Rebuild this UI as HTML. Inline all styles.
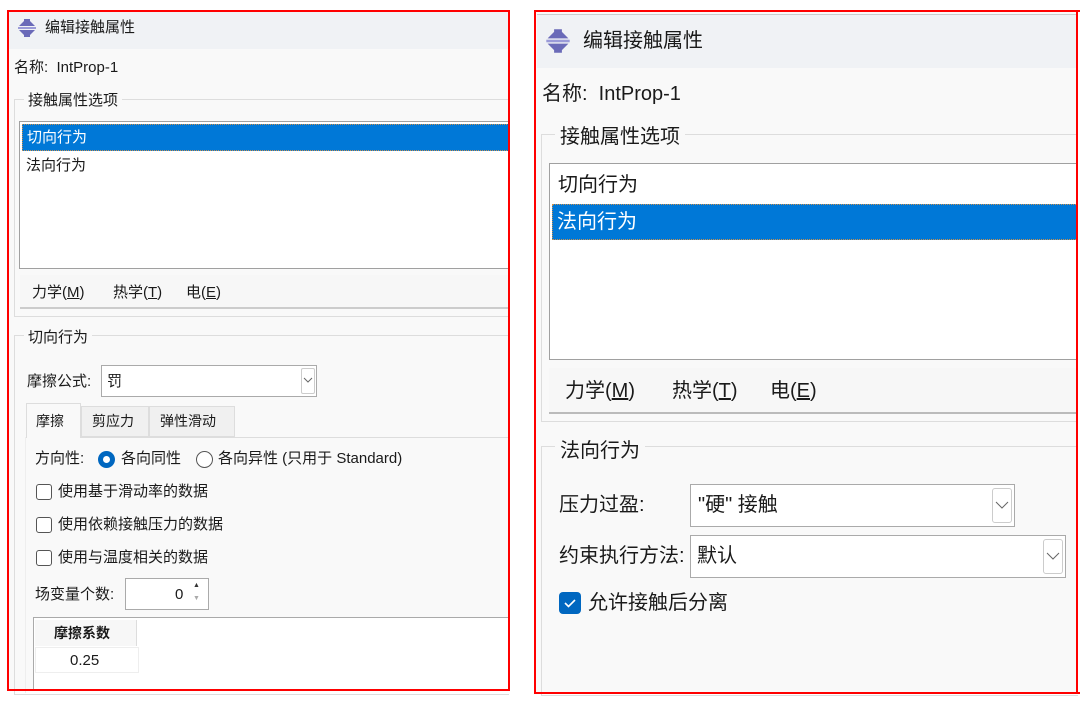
<!DOCTYPE html>
<html><head><meta charset="utf-8"><style>
*{margin:0;padding:0;box-sizing:border-box}
body{width:1080px;height:703px;background:#fff;position:relative;overflow:hidden;font-family:"Liberation Sans","Noto Sans CJK SC",sans-serif;color:#1a1a1a}
.a{position:absolute;white-space:nowrap}
.box{position:absolute}
.t{line-height:1}
</style></head><body>

<!-- LEFT PANEL -->
<div class="box" style="left:8px;top:11px;width:501px;height:679px;background:#f9f9f9"></div>
<div class="box" style="left:8px;top:11px;width:501px;height:38px;background:#f0f2f5"></div>
<svg class="a" style="left:17px;top:18px" width="20" height="20" viewBox="0 0 20 20"><path d="M7 1h6v2l5 5H2l5-5z M2 12h16l-5 5v2H7v-2z" fill="#6a6ab8"/><rect x="1" y="9" width="18" height="2" fill="#9a9ad8"/></svg>
<div class="a t" style="left:45px;top:20px;font-size:15px">编辑接触属性</div>
<div class="a t" style="left:14px;top:60px;font-size:15px">名称:&nbsp; IntProp-1</div>
<div class="box" style="left:14px;top:99px;width:495px;height:218px;border:1px solid #ddd;border-right:none"></div>
<div class="a t" style="left:24px;top:93px;font-size:15px;background:#f9f9f9;padding:0 4px">接触属性选项</div>
<div class="box" style="left:19px;top:121px;width:490px;height:148px;background:#fff;border:1px solid #a0a0a0;border-right:none"></div>
<div class="box" style="left:22px;top:124px;width:487px;height:27px;background:#0078d7;border:1px dotted #c89050"></div>
<div class="a t" style="left:27px;top:130px;font-size:15px;color:#fff">切向行为</div>
<div class="a t" style="left:26px;top:158px;font-size:15px">法向行为</div>
<div class="box" style="left:20px;top:275px;width:489px;height:34px;background:#f7f7f7;border-bottom:2px solid #ccc"></div>
<div class="a t" style="left:32px;top:285px;font-size:15px">力学(<u>M</u>)</div>
<div class="a t" style="left:113px;top:285px;font-size:15px">热学(<u>T</u>)</div>
<div class="a t" style="left:186px;top:285px;font-size:15px">电(<u>E</u>)</div>
<div class="box" style="left:14px;top:335px;width:495px;height:360px;border:1px solid #ddd;border-right:none"></div>
<div class="a t" style="left:24px;top:330px;font-size:15px;background:#f9f9f9;padding:0 4px">切向行为</div>
<div class="a t" style="left:27px;top:374px;font-size:15px">摩擦公式:</div>
<div class="box" style="left:101px;top:365px;width:216px;height:32px;background:#fff;border:1px solid #aaa"></div>
<div class="a t" style="left:107px;top:374px;font-size:15px">罚</div>
<div class="box" style="left:301px;top:368px;width:14px;height:26px;border:1px solid #ccc;border-radius:2px"></div>
<svg class="a" style="left:303px;top:376px" width="10" height="8"><path d="M1 2l4 4 4-4" stroke="#666" fill="none"/></svg>
<div class="box" style="left:26px;top:403px;width:55px;height:35px;background:#f9f9f9;border:1px solid #ddd;border-bottom:none"></div>
<div class="box" style="left:81px;top:406px;width:68px;height:31px;background:#f0f0f0;border:1px solid #ddd"></div>
<div class="box" style="left:149px;top:406px;width:86px;height:31px;background:#f0f0f0;border:1px solid #ddd"></div>
<div class="box" style="left:81px;top:437px;width:428px;height:1px;background:#ddd"></div>
<div class="box" style="left:25px;top:437px;width:1px;height:256px;background:#eee"></div>
<div class="a t" style="left:36px;top:414px;font-size:14px">摩擦</div>
<div class="a t" style="left:92px;top:414px;font-size:14px">剪应力</div>
<div class="a t" style="left:160px;top:414px;font-size:14px">弹性滑动</div>
<div class="a t" style="left:35px;top:451px;font-size:15px">方向性:</div>
<div class="box" style="left:98px;top:451px;width:17px;height:17px;border-radius:50%;background:#0067c0"></div>
<div class="box" style="left:103px;top:456px;width:7px;height:7px;border-radius:50%;background:#fff"></div>
<div class="a t" style="left:121px;top:451px;font-size:15px">各向同性</div>
<div class="box" style="left:196px;top:451px;width:17px;height:17px;border-radius:50%;border:1px solid #555;background:#fff"></div>
<div class="a t" style="left:218px;top:451px;font-size:15px">各向异性 (只用于 Standard)</div>
<div class="box" style="left:36px;top:484px;width:16px;height:16px;border:1px solid #555;border-radius:3px;background:#fff"></div>
<div class="a t" style="left:58px;top:484px;font-size:15px">使用基于滑动率的数据</div>
<div class="box" style="left:36px;top:517px;width:16px;height:16px;border:1px solid #555;border-radius:3px;background:#fff"></div>
<div class="a t" style="left:58px;top:517px;font-size:15px">使用依赖接触压力的数据</div>
<div class="box" style="left:36px;top:550px;width:16px;height:16px;border:1px solid #555;border-radius:3px;background:#fff"></div>
<div class="a t" style="left:58px;top:550px;font-size:15px">使用与温度相关的数据</div>
<div class="a t" style="left:35px;top:587px;font-size:15px">场变量个数:</div>
<div class="box" style="left:125px;top:578px;width:84px;height:32px;background:#fff;border:1px solid #aaa"></div>
<div class="a t" style="left:175px;top:587px;font-size:15px">0</div>
<div class="a" style="left:193px;top:582px;font-size:7px;color:#333">▲</div>
<div class="a" style="left:193px;top:595px;font-size:7px;color:#aaa">▼</div>
<div class="box" style="left:33px;top:617px;width:476px;height:74px;background:#fff;border:1px solid #aaa;border-right:none;border-bottom:none"></div>
<div class="box" style="left:35px;top:620px;width:102px;height:26px;background:#f7f7f7;border-right:1px solid #ddd"></div>
<div class="a t" style="left:54px;top:626px;font-size:14px;font-weight:bold">摩擦系数</div>
<div class="box" style="left:35px;top:647px;width:104px;height:26px;border:1px solid #eee"></div>
<div class="a t" style="left:70px;top:653px;font-size:15px">0.25</div>
<div class="box" style="left:7px;top:10px;width:503px;height:681px;border:2px solid #f00"></div>

<!-- RIGHT PANEL -->
<div class="box" style="left:535px;top:11px;width:543px;height:682px;background:#f9f9f9"></div>
<div class="box" style="left:537px;top:14px;width:541px;height:54px;background:#f0f2f5;border-top:1px solid #ccc"></div>
<svg class="a" style="left:545px;top:28px" width="26" height="26" viewBox="0 0 20 20"><path d="M7 1h6v2l5 5H2l5-5z M2 12h16l-5 5v2H7v-2z" fill="#6a6ab8"/><rect x="1" y="9" width="18" height="2" fill="#9a9ad8"/></svg>
<div class="a t" style="left:583px;top:31px;font-size:20px">编辑接触属性</div>
<div class="a t" style="left:542px;top:84px;font-size:20px">名称:&nbsp; IntProp-1</div>
<div class="box" style="left:541px;top:134px;width:537px;height:288px;border:1px solid #ddd;border-right:none"></div>
<div class="a t" style="left:555px;top:127px;font-size:20px;background:#f9f9f9;padding:0 5px">接触属性选项</div>
<div class="box" style="left:549px;top:163px;width:529px;height:197px;background:#fff;border:1px solid #a0a0a0;border-right:none"></div>
<div class="a t" style="left:558px;top:175px;font-size:20px">切向行为</div>
<div class="box" style="left:552px;top:204px;width:526px;height:36px;background:#0078d7;border:1px dotted #c89050"></div>
<div class="a t" style="left:557px;top:212px;font-size:20px;color:#fff">法向行为</div>
<div class="box" style="left:549px;top:368px;width:529px;height:46px;background:#f7f7f7;border-bottom:2px solid #bbb"></div>
<div class="a t" style="left:565px;top:381px;font-size:20px">力学(<u>M</u>)</div>
<div class="a t" style="left:672px;top:381px;font-size:20px">热学(<u>T</u>)</div>
<div class="a t" style="left:770px;top:381px;font-size:20px">电(<u>E</u>)</div>
<div class="box" style="left:541px;top:446px;width:537px;height:250px;border:1px solid #ddd;border-right:none"></div>
<div class="a t" style="left:555px;top:441px;font-size:20px;background:#f9f9f9;padding:0 5px">法向行为</div>
<div class="a t" style="left:559px;top:495px;font-size:20px">压力过盈:</div>
<div class="box" style="left:690px;top:484px;width:325px;height:43px;background:#fff;border:1px solid #aaa"></div>
<div class="a t" style="left:698px;top:495px;font-size:20px">"硬" 接触</div>
<div class="box" style="left:992px;top:488px;width:20px;height:35px;border:1px solid #ccc;border-radius:3px"></div>
<svg class="a" style="left:995px;top:500px" width="14" height="10"><path d="M1 2l6 6 6-6" stroke="#666" fill="none"/></svg>
<div class="a t" style="left:559px;top:546px;font-size:20px">约束执行方法:</div>
<div class="box" style="left:690px;top:535px;width:376px;height:43px;background:#fff;border:1px solid #aaa"></div>
<div class="a t" style="left:697px;top:546px;font-size:20px">默认</div>
<div class="box" style="left:1043px;top:539px;width:20px;height:35px;border:1px solid #ccc;border-radius:3px"></div>
<svg class="a" style="left:1046px;top:551px" width="14" height="10"><path d="M1 2l6 6 6-6" stroke="#666" fill="none"/></svg>
<div class="box" style="left:559px;top:592px;width:22px;height:22px;background:#0067c0;border-radius:4px"></div>
<svg class="a" style="left:562px;top:595px" width="16" height="16"><path d="M3 8l3.5 3.5L13 5" stroke="#fff" stroke-width="1.6" fill="none"/></svg>
<div class="a t" style="left:588px;top:593px;font-size:20px">允许接触后分离</div>
<div class="box" style="left:534px;top:10px;width:546px;height:684px;border:2px solid #f00;border-right:none"></div>
<div class="box" style="left:1076px;top:10px;width:2px;height:684px;background:#f00"></div>
</body></html>
